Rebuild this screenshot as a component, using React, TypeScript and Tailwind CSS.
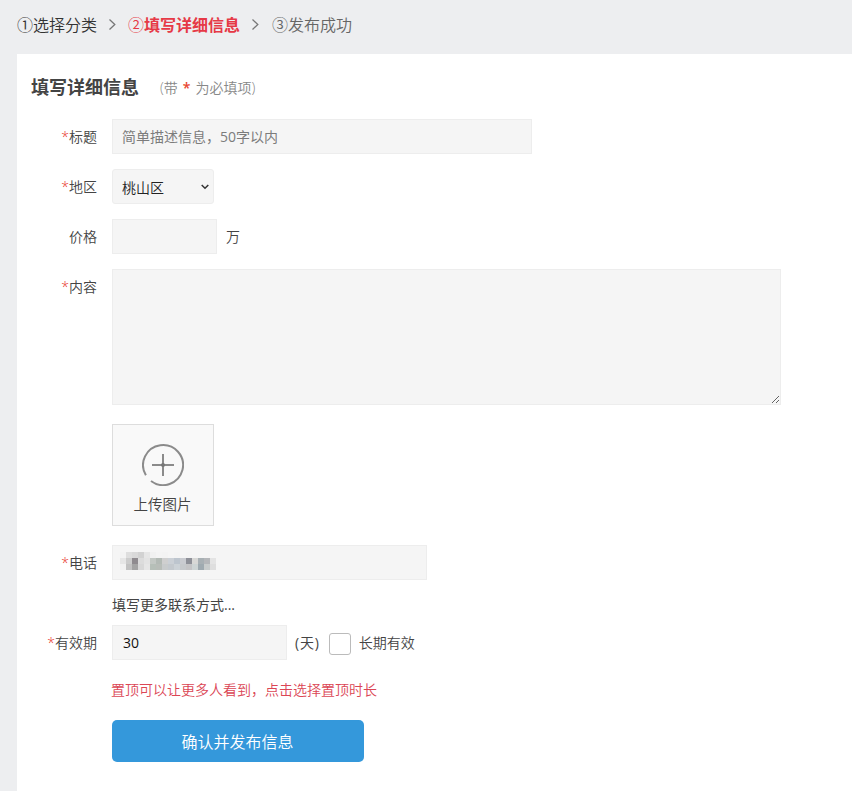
import type { ReactNode } from "react";

const mosaic = [
  "#f3f3f3", "#dedede", "#d9d9d9", "#d2d2d2", "#e6e6e6", "#f1f1f1", "#f4f4f4", "#f3f3f3", "#f5f5f5", "#f4f4f4", "#f5f5f5", "#f4f4f4", "#f5f5f5", "#f5f5f5", "#f5f5f5", "#f5f5f5",
  "#e6e6e6", "#cccccc", "#8f8b8f", "#dcdcdc", "#e3e3e3", "#c3c8c4", "#b3bab5", "#cfcfcf", "#cbd0d6", "#bdc5ce", "#c9cbd0", "#8e9098", "#d8d8d6", "#a8b0b4", "#b5b7ba", "#e4e4e4",
  "#f2f2f2", "#c2c2c2", "#a4a4a4", "#d8d8d8", "#e6e6e6", "#b6bfb8", "#b8bdb8", "#c8cbcc", "#c4c9ce", "#ccd2d7", "#c6c9cc", "#c4c4c6", "#cdd4d4", "#9faab0", "#c8cccc", "#dedede",
];

function Row({ label, required, className = "", children }: { label?: string; required?: boolean; className?: string; children: ReactNode }) {
  return (
    <div className={"flex " + className}>
      <div className="mr-[15px] w-20 shrink-0 text-right leading-[35px]">
        {required && <span className="text-[#e8321f]">*</span>}
        {label}
      </div>
      {children}
    </div>
  );
}

function Arrow() {
  return (
    <svg className="mx-[11px] h-[11px] w-[9px]" viewBox="0 0 9 11" fill="none" stroke="#777" strokeWidth="1.3">
      <path d="M1.5 .5l5.3 5L1.5 10.5" />
    </svg>
  );
}

const field = "border border-[#ededed] bg-[#f5f5f5] px-[9px] outline-none";

export default function App() {
  return (
    <div className="h-[791px] overflow-hidden bg-[#edeef0] pl-[17px] font-['Open_Sans','Noto_Sans_CJK_SC',sans-serif] text-sm font-[350] text-[#444]">
      <nav className="flex h-[54px] items-center pb-[5px] text-base leading-6">
        <span className="text-[#333]">①选择分类</span>
        <Arrow />
        <span className="text-[#e63946]">②<b>填写详细信息</b></span>
        <Arrow />
        <span className="pl-px text-[#666]">③发布成功</span>
      </nav>
      <main className="h-[737px] bg-white">
        <header className="flex h-[65px] items-center pl-3.5">
          <h1 className="text-lg font-bold leading-7">填写详细信息</h1>
          <span className="ml-[21px] whitespace-pre pt-0.5 text-[#888]">(带<span className="mx-[5px] font-semibold text-[#e8452f]">*</span>为必填项)</span>
        </header>
        <Row label="标题" required className="h-[50px]">
          <input className={field + " h-[35px] w-[420px] font-normal placeholder:text-[#7c7c7c]"} placeholder="简单描述信息，50字以内" />
        </Row>
        <Row label="地区" required className="h-[50px]">
          <button className={field + " flex h-[35px] w-[102px] items-center justify-between rounded-[3px] pr-1 text-[#222]"}>
            <span className="pt-0.5">桃山区</span>
            <svg className="h-2 w-2" viewBox="0 0 8 8" fill="none" stroke="#333" strokeWidth="1.5"><path d="M.7 2L4 5.3 7.3 2" /></svg>
          </button>
        </Row>
        <Row label="价格" className="h-[50px]">
          <input className={field + " h-[35px] w-[105px]"} />
          <span className="ml-[9px] leading-[35px]">万</span>
        </Row>
        <Row label="内容" required className="h-[155px]">
          <textarea className={field + " h-[136px] w-[669px] resize"} />
        </Row>
        <Row className="h-[121px]">
          <button className="flex h-[102px] w-[102px] flex-col items-center border border-[#ddd] bg-[#f9f9f9] pr-px pt-[19px]">
            <svg className="h-[42px] w-[42px] shrink-0" viewBox="0 0 42 42" fill="none" stroke="#8b8b8b" strokeWidth="2">
              <path d="M3.9 31.3A20 20 0 1 1 9 37M10 21h22M21 10v22" />
              <circle cx="21" cy="21" r="2" fill="#777" stroke="none" />
            </svg>
            <span className="mt-[9px] text-[14.5px] leading-5">上传图片</span>
          </button>
        </Row>
        <Row label="电话" required className="h-[50px]">
          <div className={field + " h-[35px] w-[315px] pt-[6px]"}>
            <div className="-ml-0.5 grid w-24 grid-cols-16">
              {mosaic.map((color, i) => <span key={i} className="h-1.5" style={{ backgroundColor: color }} />)}
            </div>
          </div>
        </Row>
        <div className="h-[30px] pl-[95px] font-normal leading-5">填写更多联系方式...</div>
        <Row label="有效期" required className="h-[50px]">
          <input className={field + " h-[35px] w-[175px] pl-2.5 font-normal text-[#111]"} defaultValue="30" />
          <label className="flex h-[35px] items-center pl-2">
            <span className="font-normal tracking-[.8px]">(天)</span>
            <span className="ml-[9px] mr-2 mt-0.5 h-[22px] w-[22px] rounded-[3px] border border-[#bbb] bg-white" />
            长期有效
          </label>
        </Row>
        <div className="h-[45px] pl-[94px] pt-[5px] leading-5 text-[#db4655]">置顶可以让更多人看到，点击选择置顶时长</div>
        <button className="ml-[95px] h-[42px] w-[252px] rounded-[5px] bg-[#3498db] pr-px pt-0.5 text-base text-white">确认并发布信息</button>
      </main>
    </div>
  );
}
